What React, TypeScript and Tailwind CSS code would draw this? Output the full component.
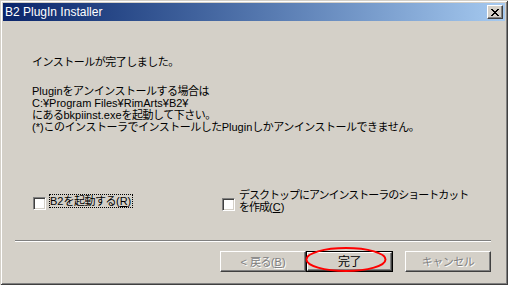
import React from 'react';

// split text so that Japanese runs get tighter tracking (MS UI Gothic kana are narrow)
const CJK_SPLIT = /([\u3000-\u30ff\u4e00-\u9fff\uff00-\uffef]+)/;
const CJK_TEST = /^[\u3000-\u30ff\u4e00-\u9fff\uff00-\uffef]+$/;

function Jp({ text, tight }: { text: string; tight?: boolean }) {
  return (
    <>
      {text.split(CJK_SPLIT).map((part, i) =>
        CJK_TEST.test(part) ? (
          <span key={i} className={tight ? 'tracking-[-1px]' : 'tracking-[-0.5px]'}>
            {part}
          </span>
        ) : (
          <React.Fragment key={i}>{part}</React.Fragment>
        )
      )}
    </>
  );
}

function CloseButton() {
  return (
    <div className="w-[16px] h-[14px] flex items-center justify-center bg-[#d4d0c8] border border-t-white border-l-white border-r-[#404040] border-b-[#404040] shadow-[inset_-1px_-1px_0_#808080]">
      <svg width="8" height="7" viewBox="0 0 8 7" className="mr-[1px]">
        <path
          fill="#000"
          d="M0 0h2v1H0z M6 0h2v1H6z M1 1h2v1H1z M5 1h2v1H5z M2 2h4v1H2z M3 3h2v1H3z M2 4h4v1H2z M1 5h2v1H1z M5 5h2v1H5z M0 6h2v1H0z M6 6h2v1H6z"
        />
      </svg>
    </div>
  );
}

function CheckBox() {
  return (
    <div className="w-[13px] h-[13px] shrink-0 bg-white border border-t-[#808080] border-l-[#808080] border-r-white border-b-white shadow-[inset_1px_1px_0_#404040,inset_-1px_-1px_0_#d4d0c8]" />
  );
}

function Button({
  children,
  disabled,
  isDefault,
  width,
}: {
  children: React.ReactNode;
  disabled?: boolean;
  isDefault?: boolean;
  width: string;
}) {
  const label = (
    <span className={disabled ? 'text-[#808080] [text-shadow:1px_1px_0_#fff]' : 'text-black'}>{children}</span>
  );
  if (isDefault) {
    return (
      <div className={`${width} h-[21px] border border-black`}>
        <div className="w-full h-full flex items-center justify-center bg-[#d4d0c8] border border-t-white border-l-white border-r-[#404040] border-b-[#404040] shadow-[inset_-1px_-1px_0_#808080]">
          {label}
        </div>
      </div>
    );
  }
  return (
    <div
      className={`${width} h-[21px] flex items-center justify-center bg-[#d4d0c8] border border-t-white border-l-white border-r-[#404040] border-b-[#404040] shadow-[inset_-1px_-1px_0_#808080]`}
    >
      {label}
    </div>
  );
}

export default function App() {
  return (
    <div className="relative w-[508px] h-[285px] overflow-hidden bg-[#d4d0c8] p-[3px] flex flex-col font-['Liberation_Sans','Noto_Sans_CJK_JP',sans-serif] text-[11px] leading-[12px] text-black shadow-[inset_1px_1px_0_#d4d0c8,inset_-1px_-1px_0_#404040,inset_2px_2px_0_#fff,inset_-2px_-2px_0_#808080]">
      {/* Title bar */}
      <div className="h-[18px] shrink-0 flex items-center justify-between pl-[2px] pr-[2px] bg-gradient-to-r from-[#0a246a] to-[#a6caf0]">
        <span className="text-white text-[12px]">B2 PlugIn Installer</span>
        <CloseButton />
      </div>

      {/* Message */}
      <div className="ml-[29px] mt-[35px]">
        <Jp text="インストールが完了しました。" />
      </div>
      <div className="ml-[29px] mt-[17px] flex flex-col">
        <div>
          <Jp text="Pluginをアンインストールする場合は" />
        </div>
        <div>C:¥Program Files¥RimArts¥B2¥</div>
        <div>
          <Jp text="にあるbkpiinst.exeを起動して下さい。" />
        </div>
        <div>
          <Jp text="(*)このインストーラでインストールしたPluginしかアンインストールできません。" />
        </div>
      </div>

      {/* Options */}
      <div className="mt-[56px] flex items-start">
        <div className="ml-[30px] w-[189px] flex items-start mt-[5px]">
          <div className="mt-[3px]">
            <CheckBox />
          </div>
          <span className="ml-[3px] h-[14px] border border-dotted border-black pr-[1px] leading-[12px]">
            <Jp text="B2を起動する" />(<u>R</u>)
          </span>
        </div>
        <div className="flex items-start">
          <div className="mt-[9px]">
            <CheckBox />
          </div>
          <div className="ml-[4px] leading-[12px]">
            <Jp text="デスクトップにアンインストーラのショートカット" tight />
            <br />
            <Jp text="を作成" tight />(<u>C</u>)
          </div>
        </div>
      </div>

      {/* Separator */}
      <div className="mt-[27px] ml-[12px] w-[476px] h-0 border-t border-t-[#808080] border-b border-b-white" />

      {/* Buttons */}
      <div className="mt-[9px] flex justify-end pr-[14px]">
        <Button width="w-[86px]" disabled>
          &lt; <Jp text="戻る" />(<u>B</u>)
        </Button>
        <Button width="w-[87px]" isDefault>
          <span className="text-[12px]">
            <Jp text="完了" />
          </span>
        </Button>
        <div className="ml-[12px]">
          <Button width="w-[86px]" disabled>
            <Jp text="キャンセル" />
          </Button>
        </div>
      </div>

      {/* red annotation ellipse */}
      <svg className="absolute left-[305px] top-[246px]" width="82" height="27" viewBox="0 0 82 27">
        <ellipse cx="41" cy="13.5" rx="39.5" ry="11.5" fill="none" stroke="#ff0000" strokeWidth="2" />
      </svg>
    </div>
  );
}
